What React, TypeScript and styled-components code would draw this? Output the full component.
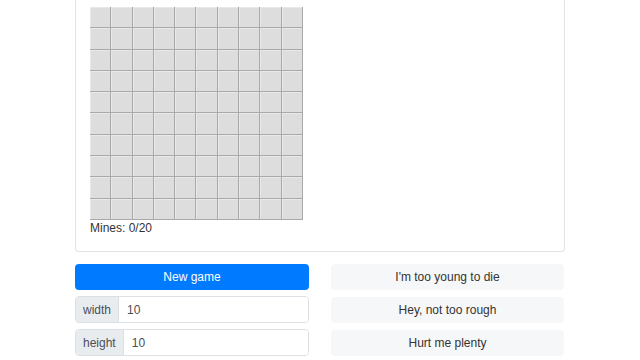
import React from "react";
import styled, { createGlobalStyle } from "styled-components";

const Global = createGlobalStyle`
  html, body { margin: 0; padding: 0; background: #fff; }
  body { font-family: "Liberation Sans", Arial, sans-serif; color: #212529; font-size: 12px; }
  * { box-sizing: border-box; }
`;

const Page = styled.div`
  width: 490px;
  margin: 0 auto;
`;

const Card = styled.div`
  border: 1px solid #e3e3e3;
  border-top: none;
  border-radius: 0 0 4px 4px;
  padding: 7px 14px 16px 14px;
`;

const Board = styled.div`
  display: grid;
  grid-template-columns: repeat(10, 1fr);
  grid-template-rows: repeat(10, 1fr);
  width: 213px;
  height: 213px;
  background: #dcdcdc;
`;

const Cell = styled.div`
  background: #dddddd;
  border-right: 1px solid #a9a9a9;
  border-bottom: 1px solid #a9a9a9;
  box-shadow: inset 1px 1px 0 #e9e9e9;
`;

const Status = styled.div`
  margin-top: 1px;
  font-size: 12px;
  line-height: 14px;
  color: #333;
`;

const Controls = styled.div`
  display: grid;
  grid-template-columns: 234px 233px;
  column-gap: 22px;
  margin-top: 12px;
`;

const Column = styled.div<{ $gap: number }>`
  display: flex;
  flex-direction: column;
  gap: ${(p) => p.$gap}px;
`;

const Button = styled.button<{ $primary?: boolean }>`
  height: 26px;
  border: none;
  border-radius: 4px;
  font-family: "Liberation Sans", Arial, sans-serif;
  font-size: 12px;
  background: ${(p) => (p.$primary ? "#007bff" : "#f6f7f9")};
  color: ${(p) => (p.$primary ? "#fff" : "#333")};
  padding: 0;
`;

const InputGroup = styled.div`
  display: flex;
  height: 27px;
  border: 1px solid #dcdfe3;
  border-radius: 4px;
  overflow: hidden;
`;

const Addon = styled.span`
  display: flex;
  align-items: center;
  padding: 0 7px;
  background: #e9ecef;
  color: #495057;
  font-size: 12px;
  border-right: 1px solid #dcdfe3;
`;

const Field = styled.input`
  flex: 1;
  min-width: 0;
  border: none;
  outline: none;
  padding: 0 8px;
  font-family: "Liberation Sans", Arial, sans-serif;
  font-size: 12px;
  color: #495057;
  background: #fff;
`;

export default function App() {
  const cells = Array.from({ length: 100 }, (_, i) => i);
  return (
    <>
      <Global />
      <Page>
        <Card>
          <Board>
            {cells.map((i) => (
              <Cell key={i} />
            ))}
          </Board>
          <Status>Mines: 0/20</Status>
        </Card>
        <Controls>
          <Column $gap={6}>
            <Button $primary>New game</Button>
            <InputGroup>
              <Addon>width</Addon>
              <Field defaultValue="10" />
            </InputGroup>
            <InputGroup>
              <Addon>height</Addon>
              <Field defaultValue="10" />
            </InputGroup>
          </Column>
          <Column $gap={7}>
            <Button>I'm too young to die</Button>
            <Button>Hey, not too rough</Button>
            <Button>Hurt me plenty</Button>
          </Column>
        </Controls>
      </Page>
    </>
  );
}
